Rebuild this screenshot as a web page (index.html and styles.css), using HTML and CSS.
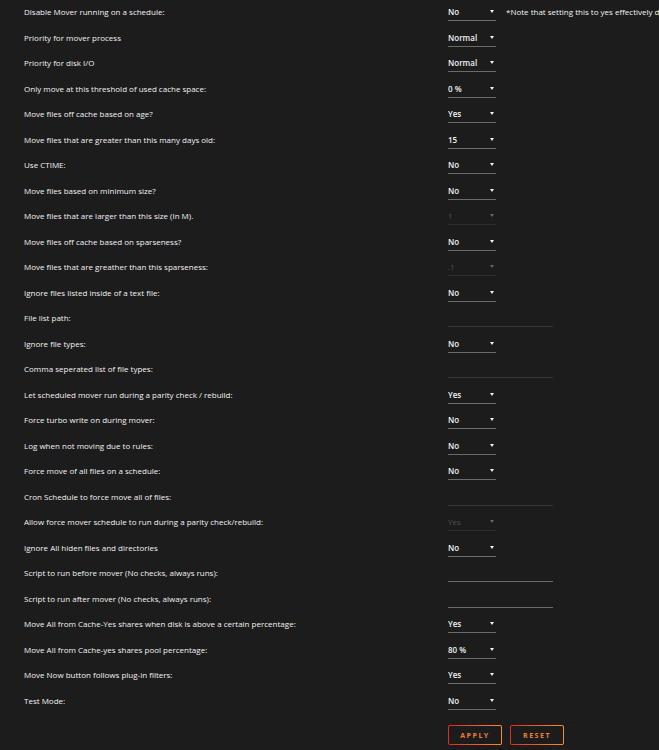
FILE: index.html
```html
<!DOCTYPE html>
<html lang="en">
<head>
  <meta charset="UTF-8">
  <title>Mover Tuning</title>
  <link rel="stylesheet" href="styles.css">
</head>
<body>
  <form class="settings" action="#" method="post" autocomplete="off">
    <div class="row">
      <label>Disable Mover running on a schedule:</label>
      <div class="value">
        <span class="pick"><select><option>No</option><option>Yes</option></select></span>
        <span class="note">*Note that setting this to yes effectively disables the mover from running on its own schedule</span>
      </div>
    </div>
    <div class="row">
      <label>Priority for mover process</label>
      <div class="value"><span class="pick"><select><option>Normal</option></select></span></div>
    </div>
    <div class="row">
      <label>Priority for disk I/O</label>
      <div class="value"><span class="pick"><select><option>Normal</option></select></span></div>
    </div>
    <div class="row">
      <label>Only move at this threshold of used cache space:</label>
      <div class="value"><span class="pick"><select><option>0 %</option></select></span></div>
    </div>
    <div class="row">
      <label>Move files off cache based on age?</label>
      <div class="value"><span class="pick"><select><option>Yes</option></select></span></div>
    </div>
    <div class="row">
      <label>Move files that are greater than this many days old:</label>
      <div class="value"><span class="pick"><select><option>15</option></select></span></div>
    </div>
    <div class="row">
      <label>Use CTIME:</label>
      <div class="value"><span class="pick"><select><option>No</option></select></span></div>
    </div>
    <div class="row">
      <label>Move files based on minimum size?</label>
      <div class="value"><span class="pick"><select><option>No</option></select></span></div>
    </div>
    <div class="row">
      <label>Move files that are larger than this size (In M).</label>
      <div class="value"><span class="pick off"><select disabled><option>1</option></select></span></div>
    </div>
    <div class="row">
      <label>Move files off cache based on sparseness?</label>
      <div class="value"><span class="pick"><select><option>No</option></select></span></div>
    </div>
    <div class="row">
      <label>Move files that are greather than this sparseness:</label>
      <div class="value"><span class="pick off"><select disabled><option>.1</option></select></span></div>
    </div>
    <div class="row">
      <label>Ignore files listed inside of a text file:</label>
      <div class="value"><span class="pick"><select><option>No</option></select></span></div>
    </div>
    <div class="row">
      <label>File list path:</label>
      <div class="value"><input class="field" type="text" disabled></div>
    </div>
    <div class="row">
      <label>Ignore file types:</label>
      <div class="value"><span class="pick"><select><option>No</option></select></span></div>
    </div>
    <div class="row">
      <label>Comma seperated list of file types:</label>
      <div class="value"><input class="field" type="text" disabled></div>
    </div>
    <div class="row">
      <label>Let scheduled mover run during a parity check / rebuild:</label>
      <div class="value"><span class="pick"><select><option>Yes</option></select></span></div>
    </div>
    <div class="row">
      <label>Force turbo write on during mover:</label>
      <div class="value"><span class="pick"><select><option>No</option></select></span></div>
    </div>
    <div class="row">
      <label>Log when not moving due to rules:</label>
      <div class="value"><span class="pick"><select><option>No</option></select></span></div>
    </div>
    <div class="row">
      <label>Force move of all files on a schedule:</label>
      <div class="value"><span class="pick"><select><option>No</option></select></span></div>
    </div>
    <div class="row">
      <label>Cron Schedule to force move all of files:</label>
      <div class="value"><input class="field" type="text" disabled></div>
    </div>
    <div class="row">
      <label>Allow force mover schedule to run during a parity check/rebuild:</label>
      <div class="value"><span class="pick off"><select disabled><option>Yes</option></select></span></div>
    </div>
    <div class="row">
      <label>Ignore All hiden files and directories</label>
      <div class="value"><span class="pick"><select><option>No</option></select></span></div>
    </div>
    <div class="row">
      <label>Script to run before mover (No checks, always runs):</label>
      <div class="value"><input class="field" type="text"></div>
    </div>
    <div class="row">
      <label>Script to run after mover (No checks, always runs):</label>
      <div class="value"><input class="field" type="text"></div>
    </div>
    <div class="row">
      <label>Move All from Cache-Yes shares when disk is above a certain percentage:</label>
      <div class="value"><span class="pick"><select><option>Yes</option></select></span></div>
    </div>
    <div class="row">
      <label>Move All from Cache-yes shares pool percentage:</label>
      <div class="value"><span class="pick"><select><option>80 %</option></select></span></div>
    </div>
    <div class="row">
      <label>Move Now button follows plug-in filters:</label>
      <div class="value"><span class="pick"><select><option>Yes</option></select></span></div>
    </div>
    <div class="row">
      <label>Test Mode:</label>
      <div class="value"><span class="pick"><select><option>No</option></select></span></div>
    </div>

    <div class="actions">
      <button type="submit">Apply</button>
      <button type="reset">Reset</button>
    </div>
  </form>
</body>
</html>
```

FILE: styles.css
```css
body {
  margin: 0;
  background-color: #1c1c1c;
  color: #f2f2f2;
  font-family: "Open Sans", "DejaVu Sans", sans-serif;
  font-size: 8px;
  overflow: hidden;
}

.settings {
  padding-left: 24px;
  margin-top: -1px;
}

.row {
  display: grid;
  grid-template-columns: 424px 1fr;
  align-items: center;
  height: 25.5px;
}

.value {
  display: flex;
  align-items: center;
  white-space: nowrap;
}

.pick {
  position: relative;
  display: inline-block;
  width: 48px;
  height: 18px;
  margin-top: 1px;
}

.pick::after {
  content: "";
  position: absolute;
  right: 2px;
  top: 7px;
  border-left: 2px solid transparent;
  border-right: 2px solid transparent;
  border-top: 3px solid #f2f2f2;
  pointer-events: none;
}

.pick select {
  appearance: none;
  display: block;
  width: 100%;
  height: 18px;
  margin: 0;
  padding: 0;
  background: transparent;
  border: none;
  border-bottom: 1px solid #6a6a6a;
  border-radius: 0;
  color: #f2f2f2;
  font-family: inherit;
  font-size: 8px;
  font-weight: 600;
  outline: none;
}

.pick.off select {
  color: #666;
  font-weight: normal;
  border-bottom-color: #383838;
}

.pick.off::after {
  border-top-color: #666;
}

.note {
  margin-left: 10px;
}

.field {
  width: 105px;
  height: 18px;
  margin: 0;
  padding: 0;
  background: transparent;
  border: none;
  border-bottom: 1px solid #6a6a6a;
  color: #f2f2f2;
  font-family: inherit;
  font-size: 8px;
  outline: none;
}

.field:disabled {
  border-bottom-color: #333;
}

.actions {
  display: flex;
  gap: 8px;
  padding-left: 424px;
  margin-top: 12px;
}

.actions button {
  width: 54px;
  height: 20px;
  padding: 0;
  border: 1px solid transparent;
  border-radius: 2px;
  background: linear-gradient(#1c1c1c, #1c1c1c) padding-box,
              linear-gradient(90deg, #e22828, #ff8c2f) border-box;
  color: #ec8135;
  font-family: inherit;
  font-size: 7px;
  font-weight: bold;
  letter-spacing: 1.5px;
  text-transform: uppercase;
  cursor: pointer;
}
```
